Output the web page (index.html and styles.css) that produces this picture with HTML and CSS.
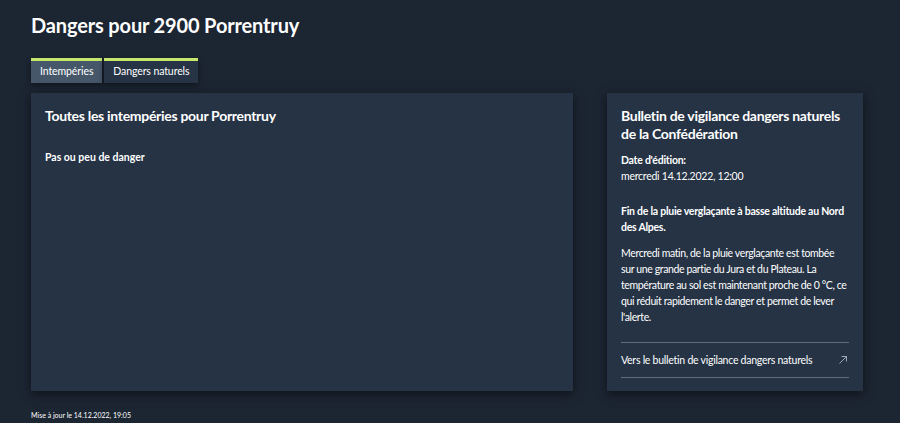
FILE: index.html
```html
<!DOCTYPE html>
<html>
  <head>
    <title>Dangers pour 2900 Porrentruy</title>
    <link rel="stylesheet" href="styles.css">
  </head>
  <body>
    <div class="page">
      <h1 class="page-title">Dangers pour 2900 Porrentruy</h1>

      <div class="tabs">
        <button class="tab active">Intempéries</button>
        <button class="tab">Dangers naturels</button>
      </div>

      <div class="content">
        <div class="card main-card">
          <h2 class="card-title">Toutes les intempéries pour Porrentruy</h2>
          <p class="danger-level">Pas ou peu de danger</p>
        </div>

        <div class="card bulletin">
          <h2 class="card-title">Bulletin de vigilance dangers naturels de la Confédération</h2>
          <p class="edition">
            <strong>Date d'édition:</strong><br>
            mercredi 14.12.2022, 12:00
          </p>
          <p class="lead">Fin de la pluie verglaçante à basse altitude au Nord des Alpes.</p>
          <p class="text">Mercredi matin, de la pluie verglaçante est tombée sur une grande partie du Jura et du Plateau. La température au sol est maintenant proche de 0 °C, ce qui réduit rapidement le danger et permet de lever l'alerte.</p>
          <a class="bulletin-link" href="#">
            <span>Vers le bulletin de vigilance dangers naturels</span>
            <svg width="10" height="10" viewBox="0 0 10 10">
              <path d="M1.5 8.5 L8.5 1.5 M3.5 1.5 H8.5 V6.5" fill="none" stroke="#9aa6b3" stroke-width="1"/>
            </svg>
          </a>
        </div>
      </div>

      <div class="updated">Mise à jour le 14.12.2022, 19:05</div>
    </div>
  </body>
</html>
```

FILE: styles.css
```css
body {
  margin: 0;
  background-color: #1c2532;
  color: #fff;
  font-family: Lato, "Noto Sans", sans-serif;
}
.page {
  padding: 11px 37px 0 31px;
}
.page-title {
  font-size: 20px;
  font-weight: 700;
  letter-spacing: -0.15px;
  margin: 0 0 19px 0;
  line-height: 28px;
}
.tabs {
  display: flex;
  gap: 2px;
  margin-bottom: 10px;
}
.tab {
  font-family: inherit;
  font-size: 10.5px;
  letter-spacing: -0.1px;
  color: #fff;
  background-color: #263446;
  border: none;
  border-top: 3px solid #c5e86c;
  padding: 4px 9px 5px 9px;
  line-height: 13px;
  box-shadow: 0 2px 6px rgba(0, 0, 0, 0.45);
  cursor: pointer;
}
.tab.active {
  background-color: #46576a;
}
.content {
  display: flex;
  gap: 34px;
  height: 298px;
}
.card {
  background-color: #253345;
  box-shadow: 0 3px 10px rgba(0, 0, 0, 0.5);
  padding: 14px 14px 13px 14px;
  box-sizing: border-box;
}
.main-card {
  flex: 1;
}
.bulletin {
  width: 256px;
  flex-shrink: 0;
  display: flex;
  flex-direction: column;
  letter-spacing: -0.25px;
}
.card-title {
  font-size: 14px;
  font-weight: 700;
  letter-spacing: -0.3px;
  line-height: 18px;
  margin: 0;
}
.danger-level {
  font-size: 10.5px;
  font-weight: 700;
  margin: 26px 0 0 0;
}
.edition {
  font-size: 10.5px;
  line-height: 16px;
  margin: 9px 0 0 0;
}
.lead {
  font-size: 10.5px;
  font-weight: 700;
  line-height: 16px;
  margin: 19px 0 0 0;
}
.text {
  font-size: 10.5px;
  letter-spacing: -0.37px;
  line-height: 16px;
  margin: 10px 0 0 0;
}
.bulletin-link {
  margin-top: auto;
  display: flex;
  justify-content: space-between;
  align-items: center;
  color: #fff;
  text-decoration: none;
  font-size: 10.5px;
  border-top: 1px solid #5f6e7d;
  border-bottom: 1px solid #5f6e7d;
  padding: 11px 0 11px 0;
}
.bulletin-link svg {
  margin-right: 1px;
}
.updated {
  font-size: 7px;
  margin-top: 20px;
}
```
